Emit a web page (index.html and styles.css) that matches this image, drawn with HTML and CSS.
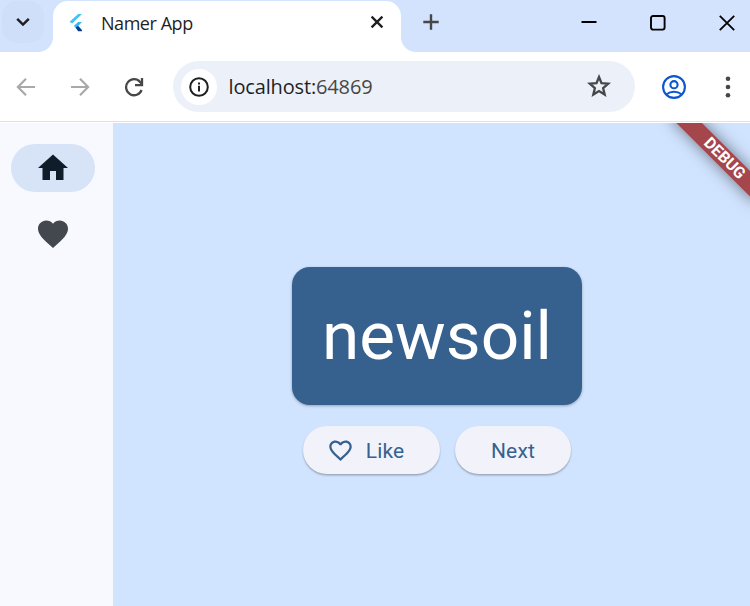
FILE: index.html
```html
<!DOCTYPE html>
<html lang="en">
<head>
<meta charset="utf-8">
<title>Namer App</title>
<link rel="stylesheet" href="styles.css">
</head>
<body>
<header class="tabstrip">
  <button class="tab-search" aria-label="Search tabs"><svg width="42" height="42" viewBox="0 0 42 42"><path d="M15.2 17.9l5.8 5.7 5.8-5.7" fill="none" stroke="#1f1f1f" stroke-width="2.5"/></svg></button>
  <div class="tab">
    <svg class="logo" width="14" height="19" viewBox="0 0 14 19"><path d="M9.2 1H13L3.2 10.6 0.6 8.7z" fill="#40c4f5"/><path d="M9.1 9H13L9.2 13 13 17.2H9.1L4.900 13z" fill="#35b8f0"/><path d="M6.600 14.600l2.600-1.700L13 17.200v1H9.100z" fill="#083b91"/></svg>
    <span class="tab-title">Namer App</span>
    <svg class="tab-close" width="14" height="14" viewBox="0 0 14 14"><path d="M1.6 1.6l10.8 10.8M12.4 1.6L1.6 12.4" fill="none" stroke="#1f1f1f" stroke-width="2.3"/></svg>
  </div>
  <svg class="new-tab" width="16" height="16" viewBox="0 0 16 16"><path d="M8 .3v15.4M.3 8h15.4" stroke="#474747" stroke-width="2.4"/></svg>
  <div class="window-controls">
    <svg width="16" height="16" viewBox="0 0 16 16"><path d="M.5 7h15" stroke="#000" stroke-width="2"/></svg>
    <svg width="16" height="16" viewBox="0 0 16 16"><rect x="1" y="1" width="13.6" height="13.6" rx="2" fill="none" stroke="#000" stroke-width="1.9"/></svg>
    <svg width="16" height="16" viewBox="0 0 16 16"><path d="M.8 .8l14.4 14.4M15.2 .8L.8 15.2" stroke="#000" stroke-width="1.8"/></svg>
  </div>
</header>

<nav class="toolbar">
  <svg class="back" width="20" height="20" viewBox="0 0 20 20"><path d="M19 10H2.5M10 1.7L1.9 10l8.1 8.3" fill="none" stroke="#a9a9a9" stroke-width="2.2"/></svg>
  <svg class="forward" width="20" height="20" viewBox="0 0 20 20"><path d="M1 10h16.5M10 1.7l8.1 8.3-8.1 8.3" fill="none" stroke="#a9a9a9" stroke-width="2.2"/></svg>
  <svg class="reload" width="20" height="20" viewBox="0 0 20 20"><path d="M17.6 13A8 8 0 1 1 16.1 4.9L18 7" fill="none" stroke="#474747" stroke-width="2.3"/><path d="M18 1v7.2h-7" fill="none" stroke="#474747" stroke-width="2.3"/></svg>
  <div class="address">
    <span class="site-info"><svg width="20" height="20" viewBox="0 0 20 20"><circle cx="10" cy="10" r="8.8" fill="none" stroke="#1f1f1f" stroke-width="2"/><path d="M10 8.8v5.7M10 5.5v2" stroke="#1f1f1f" stroke-width="2"/></svg></span>
    <span class="url">localhost:<span class="port">64869</span></span>
    <svg class="star" width="24" height="23" viewBox="0 0 24 23"><path d="M12 3l2.5 6.2 6.7.5-5.1 4.4 1.6 6.5-5.7-3.5-5.7 3.5 1.6-6.5-5.1-4.4 6.7-.5z" fill="none" stroke="#474747" stroke-width="2.3"/></svg>
  </div>
  <svg class="profile" width="24" height="24" viewBox="0 0 24 24"><g fill="none" stroke="#0b57d0" stroke-width="2.1"><circle cx="12" cy="12" r="10.9"/><circle cx="12" cy="9.7" r="3.6"/><path d="M4.6 19.3c4-3.4 10.8-3.4 14.8 0"/></g></svg>
  <svg class="menu" width="6" height="22" viewBox="0 0 6 22"><g fill="#474747"><circle cx="3" cy="2.7" r="2.3"/><circle cx="3" cy="11" r="2.3"/><circle cx="3" cy="19.3" r="2.3"/></g></svg>
</nav>

<main class="app">
  <aside class="rail">
    <span class="destination selected"><svg width="36" height="36" viewBox="0 0 24 24"><path d="M10 20v-6h4v6h5v-8h3L12 3 2 12h3v8z" fill="#0f1d2a"/></svg></span>
    <span class="destination"><svg width="36" height="36" viewBox="0 0 24 24"><path d="M12 21.35l-1.45-1.32C5.4 15.36 2 12.28 2 8.5 2 5.42 4.42 3 7.5 3c1.74 0 3.41.81 4.5 2.09C13.09 3.81 14.76 3 16.5 3 19.58 3 22 5.42 22 8.5c0 3.78-3.4 6.86-8.55 11.54z" fill="#43474e"/></svg></span>
  </aside>
  <section class="page">
    <div class="banner">DEBUG</div>
    <div class="card">newsoil</div>
    <div class="actions">
      <button class="action like"><svg width="27" height="27" viewBox="0 0 24 24"><path d="M16.5 3c-1.74 0-3.41.81-4.5 2.09C10.91 3.81 9.24 3 7.5 3 4.42 3 2 5.42 2 8.5c0 3.78 3.4 6.86 8.55 11.54L12 21.35l1.45-1.32C18.6 15.36 22 12.28 22 8.5 22 5.42 19.58 3 16.5 3zm-4.4 15.55l-.1.1-.1-.1C7.14 14.24 4 11.39 4 8.5 4 6.5 5.5 5 7.5 5c1.54 0 3.04.99 3.57 2.36h1.87C13.46 5.99 14.96 5 16.5 5c2 0 3.5 1.5 3.5 3.5 0 2.89-3.14 5.74-7.9 10.05z" fill="#36618e"/></svg><span>Like</span></button>
      <button class="action next"><span>Next</span></button>
    </div>
  </section>
</main>
</body>
</html>
```
FILE: styles.css
```css
* { box-sizing: border-box; }
body {
  margin: 0;
  height: 606px;
  display: flex;
  flex-direction: column;
  overflow: hidden;
  background: #fff;
  font-family: Roboto, "Liberation Sans", sans-serif;
}
svg { display: block; flex: none; }
button { border: 0; padding: 0; font: inherit; }

.tabstrip {
  height: 52px;
  flex: none;
  display: flex;
  background: #d3e2fd;
}
.tab-search {
  width: 42px;
  height: 42px;
  margin: 1px 9px 0 2px;
  border-radius: 15px;
  background: #cfdff9;
}
.tab {
  position: relative;
  width: 348px;
  height: 51px;
  margin-top: 1px;
  padding: 0 17px 6px 16px;
  display: flex;
  align-items: center;
  border-radius: 15px 15px 0 0;
  background: #fff;
}
.tab::before,
.tab::after {
  content: "";
  position: absolute;
  bottom: 0;
  width: 15px;
  height: 15px;
}
.tab::before { left: -15px; background: radial-gradient(circle at 0 0, transparent 14.5px, #fff 15.5px); }
.tab::after { right: -15px; background: radial-gradient(circle at 100% 0, transparent 14.5px, #fff 15.5px); }
.logo { margin-top: -2px; }
.tab-title {
  margin: -1px 0 0 18px;
  font: 18px/24px "Open Sans", sans-serif;
  letter-spacing: -.45px;
  color: #1f1f1f;
  white-space: nowrap;
}
.tab-close { margin: -3px 0 0 auto; }
.new-tab { margin: 14px 0 0 22px; }
.window-controls {
  margin: 15px 15.5px 0 auto;
  display: flex;
  gap: 53px;
}

.toolbar {
  height: 70px;
  flex: none;
  display: flex;
  align-items: center;
  padding: 1px 19px 0 16px;
  border-bottom: 1px solid #dfe1e3;
  margin-bottom: 1px;
}
.forward { margin-left: 34px; }
.reload { margin-left: 34px; }
.address {
  width: 462px;
  height: 51px;
  margin: -2px 0 0 29px;
  padding: 1px 24px 0 8px;
  display: flex;
  align-items: center;
  border-radius: 26px;
  background: #ecf0f9;
}
.site-info {
  width: 36px;
  height: 36px;
  display: grid;
  place-items: center;
  border-radius: 50%;
  background: #fff;
}
.url {
  margin-left: 11.5px;
  font: 20px/28px "Open Sans", sans-serif;
  letter-spacing: -.15px;
  color: #1f1f1f;
}
.port { color: #474747; }
.star { margin: -2px 0 0 auto; }
.profile { margin-left: 27px; }
.menu { margin-left: auto; }

.app { flex: 1; display: flex; min-height: 0; }
.rail {
  width: 113px;
  padding: 21px 18px 0 11px;
  display: flex;
  flex-direction: column;
  gap: 18px;
  background: #f8f9ff;
}
.destination {
  width: 84px;
  height: 48px;
  display: grid;
  place-items: center;
  border-radius: 24px;
}
.selected { background: #d7e3f7; }
.page {
  position: relative;
  flex: 1;
  overflow: hidden;
  display: flex;
  flex-direction: column;
  align-items: center;
  padding: 144px 0 0 11px;
  background: #d1e4ff;
}
.card {
  height: 138px;
  padding: 30px;
  border-radius: 18px;
  background: #36618e;
  color: #fff;
  font-size: 67.5px;
  line-height: 78px;
  box-shadow: 0 1px 3px rgba(0, 0, 0, .3);
}
.actions { display: flex; gap: 15px; margin-top: 21px; }
.action {
  height: 48px;
  display: flex;
  align-items: center;
  justify-content: center;
  border-radius: 24px;
  background: #f2f3fa;
  color: #36618e;
  font-size: 21px;
  letter-spacing: .15px;
  box-shadow: 0 1.5px 2px rgba(0, 0, 0, .28);
}
.action span { padding-top: 2px; }
.like { width: 137px; gap: 12px; padding-right: 12px; }
.next { width: 116px; }
.banner {
  position: absolute;
  top: 34px;
  right: -60px;
  width: 120px;
  height: 18px;
  padding-left: 14px;
  transform: rotate(45deg);
  transform-origin: 60px -34px;
  background: #a5464d;
  box-shadow: 0 0 16px rgba(0, 0, 0, .5);
  color: #fff;
  font-size: 16px;
  font-weight: 700;
  line-height: 18px;
  text-align: center;
}
```
